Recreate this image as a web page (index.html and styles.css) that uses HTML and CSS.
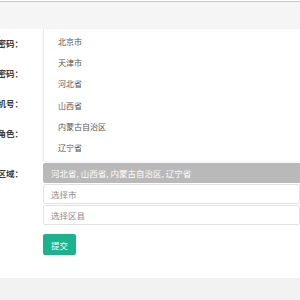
FILE: index.html
```html
<!DOCTYPE html>
<html lang="zh-CN">
<head>
  <meta charset="UTF-8" />
  <meta name="viewport" content="width=device-width, initial-scale=1.0"/>
  <title>用户信息</title>
  <link rel="stylesheet" href="styles.css">
</head>
<body>

  <div class="topbar"></div>

  <div class="panel">
    <form class="form">
      <div class="row">
        <label class="label">登录密码：</label>
        <input class="input" type="password">
      </div>
      <div class="row">
        <label class="label">确认密码：</label>
        <input class="input" type="password">
      </div>
      <div class="row">
        <label class="label">手机号：</label>
        <input class="input" type="text">
      </div>
      <div class="row row-tall">
        <label class="label">角色：</label>
        <div class="field"></div>
      </div>
      <div class="row">
        <label class="label">所属区域：</label>
        <div class="field">
          <div class="selected">河北省, 山西省, 内蒙古自治区, 辽宁省</div>
          <input class="input" type="text" placeholder="选择市">
          <input class="input" type="text" placeholder="选择区县">
        </div>
      </div>
      <div class="row">
        <span class="label"></span>
        <button class="submit" type="button">提交</button>
      </div>
    </form>

    <ul class="dropdown">
      <li>北京市</li>
      <li>天津市</li>
      <li>河北省</li>
      <li>山西省</li>
      <li>内蒙古自治区</li>
      <li>辽宁省</li>
    </ul>
  </div>

  <div class="footer"></div>

</body>
</html>
```

FILE: styles.css
```css
body {
  margin: 0;
  background: #fff;
  font-family: "Noto Sans CJK SC", "Noto Sans", sans-serif;
  font-size: 8px;
  color: #333;
  overflow: hidden;
}

.topbar {
  margin-top: 1px;
  height: 26px;
  background: #f5f5f5;
  border-top: 1px solid #c9c9c9;
  box-shadow: 0 1px 1px rgba(0,0,0,0.04);
}

.panel {
  position: relative;
  height: 250px;
}

.form {
  margin: 0;
  padding-top: 5px;
}

.row {
  display: flex;
  margin-bottom: 10px;
}

.row-tall {
  height: 30px;
}

/* labels are wider than their column and run off the left edge */
.label {
  flex: 0 0 43px;
  min-width: 0;
  display: flex;
  justify-content: flex-end;
  padding-right: 20px;
  box-sizing: border-box;
  height: 20px;
  line-height: 20px;
  white-space: nowrap;
  font-size: 8.5px;
  font-weight: bold;
  color: #3a3a3a;
}

.field {
  flex: 1;
  min-width: 0;
  display: flex;
  flex-direction: column;
}

.input {
  flex: 1;
  min-width: 0;
  height: 20px;
  box-sizing: border-box;
  margin: 0;
  padding: 0 7px;
  border: 1px solid #e2e2e2;
  border-radius: 2px;
  font-family: inherit;
  font-size: 8.5px;
  color: #333;
  outline: none;
}

.field .input {
  flex: none;
  margin-top: 1px;
}

.input::placeholder {
  color: #8c8c8c;
}

.selected {
  height: 20px;
  line-height: 20px;
  padding: 0 8px;
  background: #b9b9b9;
  border-radius: 2px 0 0 2px;
  color: #fff;
  font-size: 8.5px;
  white-space: nowrap;
  overflow: hidden;
}

.row:last-child {
  margin-top: -1px;
}

.submit {
  height: 21px;
  padding: 0 8px;
  border: none;
  border-radius: 2px;
  background: #1bb28e;
  color: #fff;
  font-family: inherit;
  font-size: 8.5px;
  cursor: pointer;
}

.dropdown {
  position: absolute;
  top: 1px;
  left: 43px;
  right: 0;
  height: 132px;
  margin: 0;
  padding: 2px 0 0;
  list-style: none;
  box-sizing: border-box;
  background: #fff;
  border-left: 1px solid #e8e8e8;
  box-shadow: 0 1px 3px rgba(0,0,0,0.06);
  color: #555;
}

.dropdown li {
  height: 21.2px;
  line-height: 21.2px;
  padding-left: 14px;
}

.footer {
  height: 30px;
  background: #f2f2f2;
}
```
